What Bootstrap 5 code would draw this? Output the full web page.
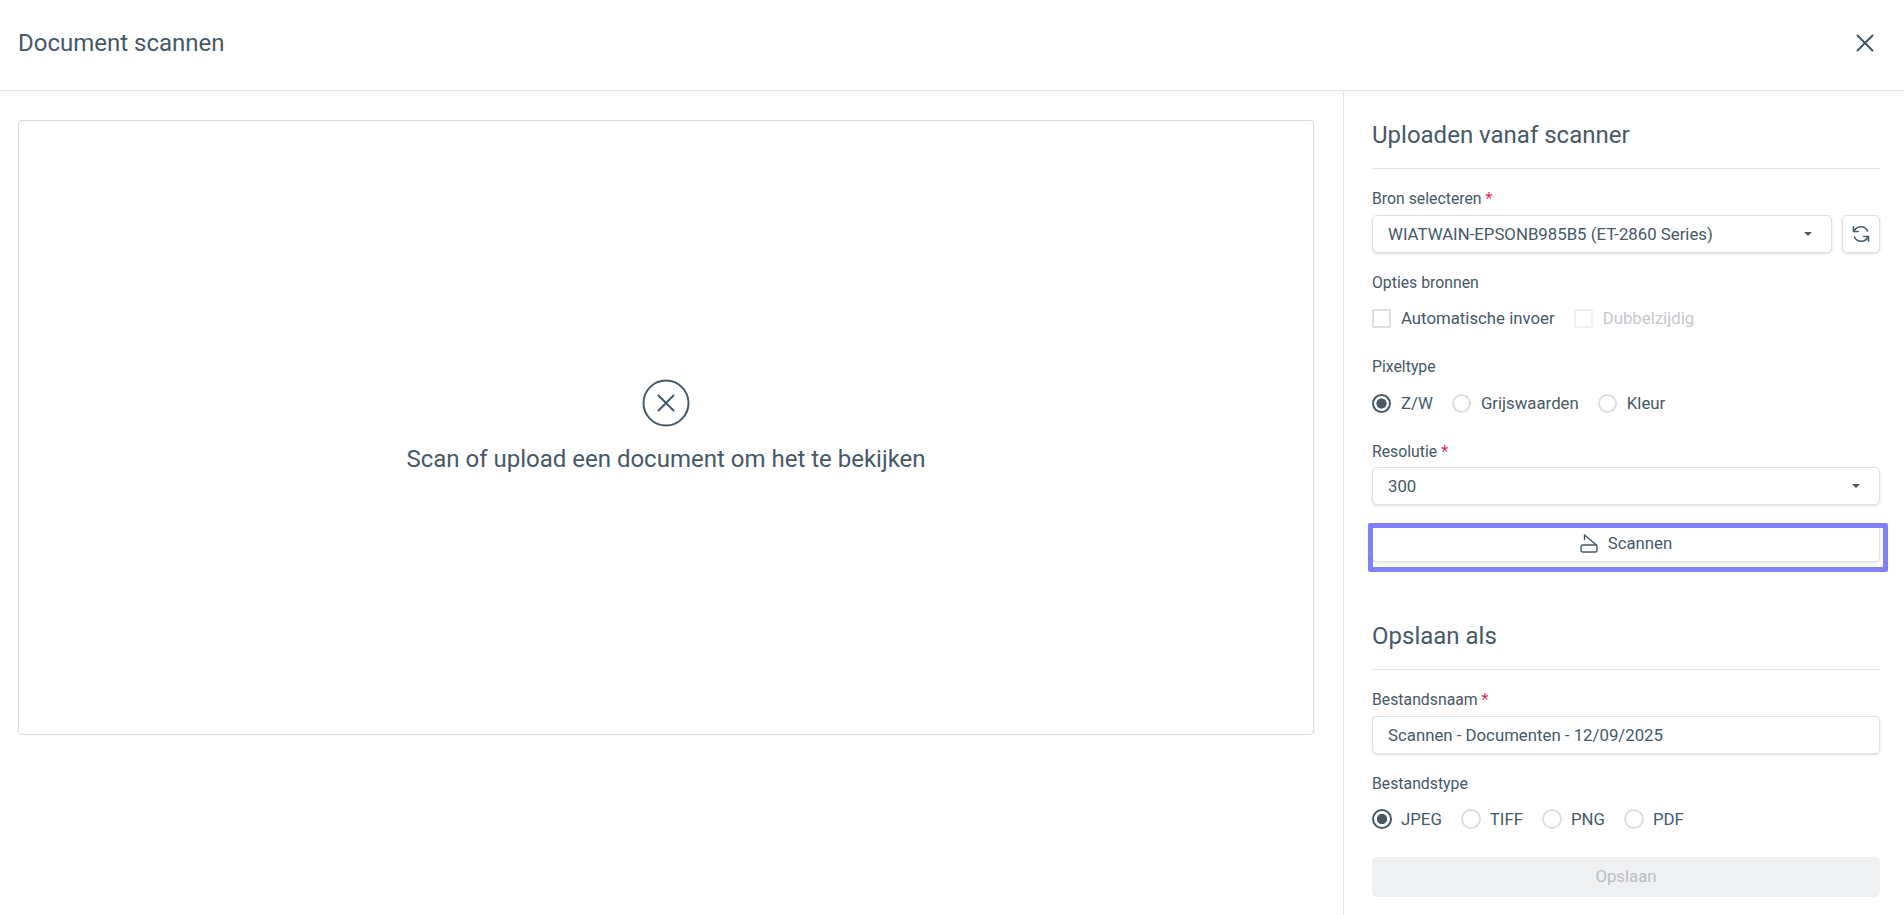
<!DOCTYPE html>
<html lang="nl">
<head>
<meta charset="utf-8">
<title>Document scannen</title>
<link href="https://cdn.jsdelivr.net/npm/bootstrap@5.3.0/dist/css/bootstrap.min.css" rel="stylesheet">
<style>
html,body{height:100%;overflow:hidden}
body{font-family:Roboto,"Liberation Sans",sans-serif;font-size:15.8px;color:#475866;background:#fff}
.scan-head{height:91px;padding:0 18px 5px;border-bottom:1px solid #e3e5e7;box-shadow:0 2px 4px rgba(0,0,0,.03)}
.scan-title{font-size:24px;font-weight:400;margin:2px 0 0;color:#475866}
.scan-close{width:24px;height:24px;margin-right:9px;padding:0;border:0;background:none;color:#475866}
.scan-main{height:824px}
.scan-left{width:1343px;padding:29px 29px 0 18px;flex:none}
.scan-view{width:1296px;height:615px;border:1px solid #d9dcdf;border-radius:4px;color:#475866}
.scan-msg{font-size:24px;margin-top:16px;line-height:32px}
.scan-view svg{display:block;margin-top:-1px}
.scan-right{width:561px;border-left:1px solid #e3e5e7;padding:0 24px 0 28px}
.sec-title{font-size:24px;font-weight:400;line-height:32px;margin:0;padding-bottom:17px;border-bottom:1px solid #e0e2e4;color:#475866}
.sec-first{margin-top:28px}
.sec-second{margin-top:58px;padding-bottom:17px}
.fld-label{display:block;line-height:20px;font-size:15.8px;margin:0;color:#475866}
.req{color:#e91e63}
.gap20{margin-top:20px}.gap29{margin-top:29px}
.mb6{margin-bottom:6px}.mb5{margin-bottom:5px}.mb15{margin-bottom:15px}.mb16{margin-bottom:16px}
.form-select.scan-sel,.form-control.scan-ctl{height:38px;font-size:16.8px;line-height:22px;color:#475866;border:1px solid #dfe1e3;border-radius:5px;box-shadow:0 1px 3px rgba(0,0,0,.13);padding:7px 15px;background-color:#fff}
.form-select.scan-sel{background-image:url("data:image/svg+xml,%3csvg xmlns='http://www.w3.org/2000/svg' viewBox='0 0 8 4'%3e%3cpath fill='%23475866' d='M0 0h8L4 4z'/%3e%3c/svg%3e");background-size:8px 4px;background-position:right 19px center}
.sel-src{width:460px}
.btn-refresh{width:38px;height:38px;padding:0;border:1px solid #dfe1e3;border-radius:5px;box-shadow:0 1px 3px rgba(0,0,0,.13);background:#fff;color:#475866;margin-left:10px}
.opt-row{height:20px;gap:0}
.form-check.scan-chk{display:flex;align-items:center;margin:0;padding:0;min-height:20px;line-height:20px;font-size:16.8px}
.form-check.scan-chk.mr19{margin-right:19px}
.scan-chk .form-check-input{float:none;margin:0 10px 0 0;flex:none;border:2px solid #dcdee0;box-shadow:none}
.scan-chk .form-check-input[type=checkbox]{width:19px;height:19px;border-radius:2px}
.scan-chk .form-check-input[type=radio]{width:19px;height:19px}
.scan-chk .form-check-input:checked[type=radio]{background-color:#fff;border-color:#475866;background-image:radial-gradient(circle,#475866 0,#475866 4.800px,transparent 5.400px)}
.scan-chk .form-check-label{color:#475866;opacity:1}
.scan-chk .form-check-input:disabled{opacity:1;border-color:#eef0f1}
.scan-chk .form-check-input:disabled ~ .form-check-label{color:#c4c8cc;opacity:1}
.big-radio .form-check-input[type=radio]{width:20px;height:20px;margin-right:9px}
.scan-wrap{position:relative;margin-top:19px;height:38px}
.btn-scan{width:508px;height:38px;padding:0;display:flex;align-items:center;justify-content:center;gap:10px;font-size:16.8px;color:#475866;background:#fff;border:1px solid #dfe1e3;border-radius:5px;box-shadow:0 1px 3px rgba(0,0,0,.13)}
.btn-scan span{position:relative;top:1px}
.scan-focus{position:absolute;left:-4px;top:-1px;width:520px;height:49px;border:5px solid #8080f8;border-radius:2px;pointer-events:none}
.btn-save{width:508px;height:40px;margin-top:28px;padding:0;font-size:16.8px;border:0;border-radius:5px;background:#eff0f2;color:#b9bdc1;opacity:1}
.btn-save:disabled{background:#eff0f2;color:#b9bdc1;opacity:1}
</style>
</head>
<body>
<header class="scan-head d-flex align-items-center justify-content-between">
  <h1 class="scan-title">Document scannen</h1>
  <button class="scan-close d-flex align-items-center justify-content-center" type="button" aria-label="Sluiten">
    <svg width="18" height="18" viewBox="0 0 18 18" fill="none" stroke="currentColor" stroke-width="2" stroke-linecap="round"><path d="M1.500 1.500l15 15M16.500 1.500l-15 15"/></svg>
  </button>
</header>
<main class="scan-main d-flex">
  <section class="scan-left">
    <div class="scan-view d-flex flex-column align-items-center justify-content-center">
      <svg width="48" height="48" viewBox="0 0 48 48" fill="none" stroke="currentColor"><circle cx="24" cy="24" r="22.500" stroke-width="2"/><path d="M16.500 16.500l15 15M31.500 16.500l-15 15" stroke-width="2" stroke-linecap="round"/></svg>
      <div class="scan-msg">Scan of upload een document om het te bekijken</div>
    </div>
  </section>
  <aside class="scan-right">
    <h2 class="sec-title sec-first">Uploaden vanaf scanner</h2>
    <label class="fld-label gap20 mb6">Bron selecteren <span class="req">*</span></label>
    <div class="d-flex">
      <select class="form-select scan-sel sel-src"><option>WIATWAIN-EPSONB985B5 (ET-2860 Series)</option></select>
      <button class="btn-refresh d-flex align-items-center justify-content-center" type="button" aria-label="Vernieuwen">
        <svg width="20" height="20" viewBox="0 0 20 20" fill="none" stroke="currentColor" stroke-width="1.600" stroke-linecap="round" stroke-linejoin="round"><path d="M3 7.500a7.300 7.300 0 0 1 13.500-.5"/><path d="M17 12.500a7.300 7.300 0 0 1-13.500 .5"/><path d="M2.500 2.800v4.700h4.700"/><path d="M17.500 17.200v-4.700h-4.700"/></svg>
      </button>
    </div>
    <label class="fld-label gap20 mb15">Opties bronnen</label>
    <div class="d-flex opt-row">
      <div class="form-check scan-chk mr19"><input class="form-check-input" type="checkbox" id="c1"><label class="form-check-label" for="c1">Automatische invoer</label></div>
      <div class="form-check scan-chk"><input class="form-check-input" type="checkbox" id="c2" disabled><label class="form-check-label" for="c2">Dubbelzijdig</label></div>
    </div>
    <label class="fld-label gap29 mb16">Pixeltype</label>
    <div class="d-flex opt-row">
      <div class="form-check scan-chk mr19"><input class="form-check-input" type="radio" name="p" id="p1" checked><label class="form-check-label" for="p1">Z/W</label></div>
      <div class="form-check scan-chk mr19"><input class="form-check-input" type="radio" name="p" id="p2"><label class="form-check-label" for="p2">Grijswaarden</label></div>
      <div class="form-check scan-chk"><input class="form-check-input" type="radio" name="p" id="p3"><label class="form-check-label" for="p3">Kleur</label></div>
    </div>
    <label class="fld-label gap29 mb5">Resolutie <span class="req">*</span></label>
    <select class="form-select scan-sel"><option>300</option></select>
    <div class="scan-wrap">
      <button class="btn-scan" type="button">
        <svg width="18" height="19" viewBox="0 0 18 19" fill="none" stroke="currentColor" stroke-width="1.400" stroke-linejoin="round" stroke-linecap="round"><path d="M4.500 1v4.500M4.500 1l12 10"/><rect x="1" y="11" width="16" height="7" rx="1.800"/></svg>
        <span>Scannen</span>
      </button>
      <div class="scan-focus"></div>
    </div>
    <h2 class="sec-title sec-second">Opslaan als</h2>
    <label class="fld-label gap20 mb6">Bestandsnaam <span class="req">*</span></label>
    <input class="form-control scan-ctl" type="text" value="Scannen - Documenten - 12/09/2025">
    <label class="fld-label gap20 mb15">Bestandstype</label>
    <div class="d-flex opt-row big-radio">
      <div class="form-check scan-chk mr19"><input class="form-check-input" type="radio" name="t" id="t1" checked><label class="form-check-label" for="t1">JPEG</label></div>
      <div class="form-check scan-chk mr19"><input class="form-check-input" type="radio" name="t" id="t2"><label class="form-check-label" for="t2">TIFF</label></div>
      <div class="form-check scan-chk mr19"><input class="form-check-input" type="radio" name="t" id="t3"><label class="form-check-label" for="t3">PNG</label></div>
      <div class="form-check scan-chk"><input class="form-check-input" type="radio" name="t" id="t4"><label class="form-check-label" for="t4">PDF</label></div>
    </div>
    <button class="btn btn-save d-block" type="button" disabled>Opslaan</button>
  </aside>
</main>
<script src="https://cdn.jsdelivr.net/npm/bootstrap@5.3.0/dist/js/bootstrap.bundle.min.js"></script>
</body>
</html>
